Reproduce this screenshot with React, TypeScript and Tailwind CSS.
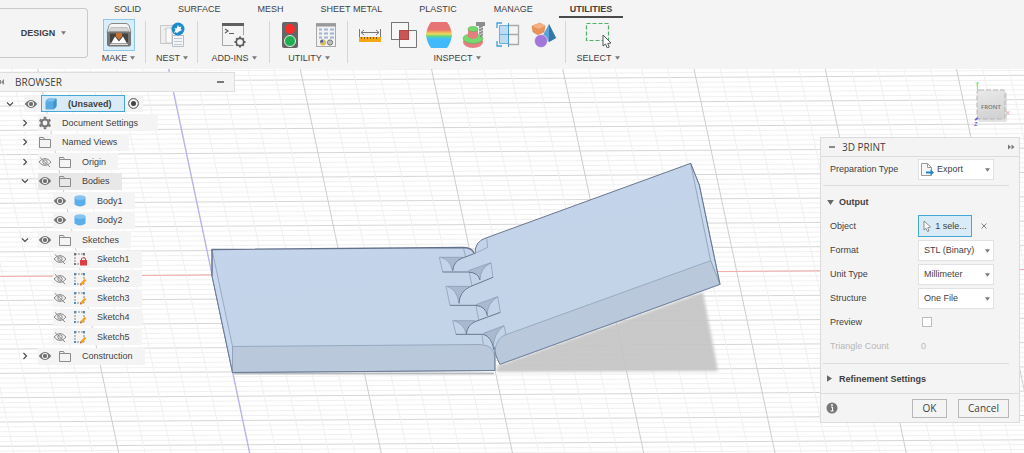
import { useState } from "react";
import type { ReactNode } from "react";

const Caret = ({ className = "" }: { className?: string }) => (
  <svg viewBox="0 0 6 4" className={`h-1 w-[5px] shrink-0 fill-[#7a7a7a] ${className}`}>
    <path d="M0 0h6L3 4z" />
  </svg>
);

/* ---------- toolbar icons ---------- */

const MakeIcon = () => (
  <svg viewBox="0 0 26 26" className="size-[26px]">
    <path d="M6 1.500h14q2 0 3 2l2 7H1l2-7q1-2 3-2z" fill="#f6f6f6" stroke="#888" />
    <path d="M2.500 9.500L5 5.500h16l2.500 4z" fill="#d3d5d6" stroke="#a5a5a5" strokeWidth=".6" />
    <rect x="1" y="9.500" width="24" height="15" rx="2.500" fill="#767676" />
    <path d="M4 11.500h18v8l-2 2.500H6l-2-2.500z" fill="#444" />
    <path d="M5 21.500l4-7 4 5 4-5 4 7z" fill="#fff" />
    <path d="M10 11h6v3.500l-3 3.500-3-3.500z" fill="#c9702f" />
    <path d="M4 22.500h18" stroke="#ddd" />
  </svg>
);

const NestIcon = () => (
  <svg viewBox="0 0 26 26" className="size-[26px]">
    <path d="M1.500 3.500h12v18h-12zM5.500 7.500h5v14" fill="#efefef" stroke="#c8c8c8" />
    <path d="M7 6h6v15H7z" fill="#fafafa" stroke="#c8c8c8" />
    <path d="M13.500 13.500h11v11h-11z" fill="#f3f5f7" stroke="#b9bfc4" />
    <path d="M15 16.500h8M15 19.500h8M15 22.500h8" stroke="#bccad6" />
    <circle cx="19" cy="7" r="6.500" fill="#1e8bcb" />
    <path d="M14.500 11.500l2-3.500-1-2 2 .5L19 3l1 2 2.500-.5-1 2.500 1.500 1-3 1.500-2 1.500-1.500-1z" fill="#fff" />
  </svg>
);

const AddInsIcon = () => (
  <svg viewBox="0 0 26 26" className="size-[26px]" fill="none" stroke="#5f5f5f">
    <path d="M1.500 2v21.500h11M22.500 2v11" stroke="#a5a5a5" />
    <path d="M1 2.500h22" strokeWidth="3" />
    <path d="M4 7l3 2L4 11M8 11.500h5" strokeWidth="1.200" />
    <circle cx="19" cy="20" r="3.700" strokeWidth="1.700" />
    <path
      d="M19 14.500v2M19 23.500v2M13.500 20h2M22.500 20h2M15.200 16.200l1.300 1.300M21.500 22.500l1.300 1.300M22.800 16.200l-1.300 1.300M16.500 22.500l-1.300 1.300"
      strokeWidth="2"
    />
  </svg>
);

const TrafficLightIcon = () => (
  <svg viewBox="0 0 18 26" className="h-[26px] w-[18px]">
    <rect x="1" y="0" width="16" height="26" rx="2" fill="#666" />
    <circle cx="9" cy="7" r="5" fill="#f92c2c" />
    <circle cx="9" cy="19" r="5.500" fill="#1fae50" stroke="#e4efe6" />
  </svg>
);

const ParameterTableIcon = () => (
  <svg viewBox="0 0 22 26" className="h-[26px] w-[22px]">
    <rect x="1.500" y="1.500" width="19" height="23" fill="#f1f2f4" stroke="#a9a9a9" />
    <path d="M1 3h20" stroke="#9a9a9a" strokeWidth="3" />
    <path d="M4 7.500h3M9 7.500h4M15 7.500h4M4 11.500h3M9 11.500h4M15 11.500h4M4 15.500h3M9 15.500h4M15 15.500h4" stroke="#a5b2d0" strokeWidth="2" />
    <circle cx="8" cy="20.500" r="3" fill="#d9bd58" />
    <path d="M8 17.500a3 3 0 0 0-3 3h3z" fill="#4c5d9c" />
    <circle cx="15" cy="20.500" r="2.600" fill="#bdbdbd" stroke="#777" />
  </svg>
);

const MeasureIcon = () => (
  <svg viewBox="0 0 24 26" className="h-[26px] w-[24px]" fill="none">
    <path d="M1.500 7v8M22.500 7v8M3 10.500h18M6 8l-3 2.500L6 13M18 8l3 2.500L18 13" stroke="#777" />
    <rect x="1" y="15" width="22" height="5" fill="#f5a814" />
    <path d="M3.500 15v2M6.500 15v2M9.500 15v2M12.500 15v2M15.500 15v2M18.500 15v2" stroke="#8a5f0c" />
  </svg>
);

const InterferenceIcon = () => (
  <svg viewBox="0 0 26 26" className="size-[26px]" fill="none" stroke="#777">
    <path d="M.5.5h17v17H.5zM8.500 8.500h17v17h-17z" fill="#f7f7f7" />
    <path d="M.5.5h17v17H.5z" />
    <path d="M8.500 8.500h9v9h-9z" fill="#cb5656" stroke="#b94242" />
  </svg>
);

const CurvatureIcon = () => (
  <svg viewBox="0 0 26 26" className="size-[26px]">
    <defs>
      <linearGradient id="curvature" x2="0" y2="1">
        <stop offset=".3" stopColor="#e77474" />
        <stop offset=".38" stopColor="#f0a55c" />
        <stop offset=".46" stopColor="#e9dc60" />
        <stop offset=".55" stopColor="#68d17d" />
        <stop offset=".61" stopColor="#3fcde0" />
        <stop offset=".67" stopColor="#42b9fa" />
      </linearGradient>
    </defs>
    <path d="M5 0h16q4 5 5 13-1 8-5 13H5Q1 21 0 13 1 5 5 0z" fill="url(#curvature)" />
  </svg>
);

const AccessibilityIcon = () => (
  <svg viewBox="0 0 26 26" className="size-[26px]">
    <ellipse cx="12" cy="20" rx="10" ry="6" fill="#e47f80" />
    <ellipse cx="12" cy="16.500" rx="10" ry="5" fill="#75d96c" stroke="#54a950" strokeWidth=".5" />
    <path d="M7 7v8q5 4 10 0V7z" fill="#e47f80" />
    <ellipse cx="12" cy="7" rx="5" ry="2.500" fill="#75d96c" stroke="#54a950" strokeWidth=".5" />
    <path d="M15 0h9v4h-2v9l-2 3-2-3V4h-3z" fill="#8c8c8c" />
    <path d="M18 7l4-2M18 10l4-2M18 13l4-2" stroke="#ddd" />
  </svg>
);

const SectionIcon = () => (
  <svg viewBox="0 0 26 26" className="size-[26px]" fill="none">
    <path d="M13 3.500h9.500v19H13M13 12.500h9" stroke="#aaa" strokeWidth="1.300" />
    <path d="M3.500 3.500h9v18h-9z" fill="#bcdcf4" stroke="#6db1de" />
    <path d="M3.500 12.500h9" stroke="#6db1de" />
    <path d="M12.500 1v24" stroke="#4797ce" />
    <path d="M1 6V1h5M1 19v5h5" stroke="#439edb" strokeWidth="1.300" />
  </svg>
);

const ComponentColorIcon = () => (
  <svg viewBox="0 0 26 26" className="size-[26px]">
    <path d="M9 1l5 3-1 6-6 3-5-3-1-6z" fill="#e8935a" stroke="#cf7a42" strokeWidth=".5" />
    <path d="M9 1l5 3-6 3-7-3z" fill="#f6b182" />
    <path d="M18 2l7 14-7 4-7-5z" fill="#5aa3d6" />
    <path d="M18 2l7 14-7 4z" fill="#3475aa" />
    <circle cx="10" cy="19" r="6.500" fill="#a277db" stroke="#f4f4f4" strokeWidth=".6" />
  </svg>
);

const SelectIcon = () => (
  <svg viewBox="0 0 26 26" className="size-[26px]" fill="none">
    <path d="M1.500 1.500h22v17h-22z" stroke="#4fb06c" strokeWidth="1.200" strokeDasharray="4 2" />
    <path d="M18 13v11l2.500-2 1.800 4 2-1-1.600-3.500 3.300-.5z" fill="#fff" stroke="#555" />
  </svg>
);

/* ---------- browser tree icons ---------- */

const ChevronIcon = ({ open }: { open?: boolean }) => (
  <svg viewBox="0 0 12 12" className="size-3" fill="none" stroke="#4d4d4d" strokeWidth="1.200">
    <path d={open ? "M3 4.500l3 3 3-3" : "M4.500 3l3 3-3 3"} />
  </svg>
);

const EyeIcon = () => (
  <svg viewBox="0 0 14 14" className="size-3.5">
    <path d="M.8 7Q7-.8 13.200 7 7 14.800.8 7z" fill="#747474" />
    <circle cx="7" cy="7" r="2.700" fill="none" stroke="#f4f4f4" />
  </svg>
);

const EyeOffIcon = () => (
  <svg viewBox="0 0 14 14" className="size-3.5" fill="none" stroke="#8a8a8a">
    <path d="M1 7Q7 0 13 7 7 14 1 7z" />
    <circle cx="7" cy="7" r="2.200" />
    <path d="M2 2.500l10 9.500" />
  </svg>
);

const FolderIcon = () => (
  <svg viewBox="0 0 14 14" className="size-3.5" fill="none" stroke="#8a8a8a">
    <path d="M1.500 12.500v-10h4l1 2h6v8z" />
    <path d="M2 4.500h5" />
  </svg>
);

const GearIcon = () => (
  <svg viewBox="0 0 14 14" className="size-3.5" fill="none" stroke="#757575">
    <circle cx="7" cy="7" r="3.500" strokeWidth="2.200" />
    <path d="M7 .8v2M7 11.200v2M1.600 3.900l1.800 1M10.600 9.100l1.800 1M1.600 10.100l1.800-1M10.600 4.900l1.800-1" strokeWidth="2.600" />
  </svg>
);

const DocumentIcon = () => (
  <svg viewBox="0 0 14 14" className="size-3.5">
    <path d="M1.500 5q0-2 2-3l1-.5h7q1 0 1 1V9q0 1-1 2l-2 1.500H2.500q-1 0-1-1z" fill="#58a9e3" />
    <path d="M2 4.500q1-2 2.500-3h7.500L9.500 4.500z" fill="#7cc0ef" />
    <path d="M9.500 4.500l3-3V9l-3 3.500z" fill="#3f90cd" />
  </svg>
);

const BodyIcon = () => (
  <svg viewBox="0 0 14 14" className="size-3.5">
    <path d="M1.500 3.500v7q5.500 4 11 0v-7z" fill="#5caeeb" />
    <ellipse cx="7" cy="3.500" rx="5.500" ry="2.300" fill="#85c4f2" />
  </svg>
);

const SketchIcon = ({ locked }: { locked?: boolean }) => (
  <svg viewBox="0 0 14 14" className="size-3.5" fill="none">
    <path d="M2 2v10h9V2z" stroke="#888" strokeDasharray="2 1" />
    <path d="M1 1h2v2H1zM10 1h2v2h-2zM1 11h2v2H1z" fill={locked ? "#777" : "#4a90c8"} />
    {locked ? (
      <>
        <rect x="7" y="8" width="7" height="5.500" fill="#e03a43" />
        <path d="M8.500 8V6.500q2-2 4 0V8" stroke="#e03a43" />
      </>
    ) : (
      <>
        <path d="M8 12.500l4.500-5" stroke="#f2a42a" strokeWidth="2.500" />
        <path d="M7 13.500l.3-2 1.700 1.600z" fill="#c55b39" />
      </>
    )}
  </svg>
);

/* ---------- data ---------- */

const tabs = ["SOLID", "SURFACE", "MESH", "SHEET METAL", "PLASTIC", "MANAGE", "UTILITIES"];

type Tool = { name: string; icon: ReactNode };

const toolGroups: { label: string; width: string; tools: Tool[] }[] = [
  { label: "MAKE", width: "w-[55px]", tools: [{ name: "3D Print", icon: <MakeIcon /> }] },
  { label: "NEST", width: "w-[52px]", tools: [{ name: "Nest", icon: <NestIcon /> }] },
  { label: "ADD-INS", width: "w-[72px]", tools: [{ name: "Scripts and Add-Ins", icon: <AddInsIcon /> }] },
  {
    label: "UTILITY",
    width: "w-[78px]",
    tools: [
      { name: "Compute All", icon: <TrafficLightIcon /> },
      { name: "Parameters", icon: <ParameterTableIcon /> },
    ],
  },
  {
    label: "INSPECT",
    width: "w-[218px]",
    tools: [
      { name: "Measure", icon: <MeasureIcon /> },
      { name: "Interference", icon: <InterferenceIcon /> },
      { name: "Curvature Map", icon: <CurvatureIcon /> },
      { name: "Accessibility Analysis", icon: <AccessibilityIcon /> },
      { name: "Section Analysis", icon: <SectionIcon /> },
      { name: "Component Colors", icon: <ComponentColorIcon /> },
    ],
  },
  { label: "SELECT", width: "w-[64px]", tools: [{ name: "Select", icon: <SelectIcon /> }] },
];

type Node = {
  label: string;
  icon: ReactNode;
  visible?: boolean;
  open?: boolean;
  child?: boolean;
  active?: boolean;
};

const nodes: Node[] = [
  { label: "Document Settings", icon: <GearIcon />, open: false },
  { label: "Named Views", icon: <FolderIcon />, open: false },
  { label: "Origin", icon: <FolderIcon />, visible: false, open: false },
  { label: "Bodies", icon: <FolderIcon />, visible: true, open: true, active: true },
  { label: "Body1", icon: <BodyIcon />, visible: true, child: true },
  { label: "Body2", icon: <BodyIcon />, visible: true, child: true },
  { label: "Sketches", icon: <FolderIcon />, visible: true, open: true },
  { label: "Sketch1", icon: <SketchIcon locked />, visible: false, child: true },
  { label: "Sketch2", icon: <SketchIcon />, visible: false, child: true },
  { label: "Sketch3", icon: <SketchIcon />, visible: false, child: true },
  { label: "Sketch4", icon: <SketchIcon />, visible: false, child: true },
  { label: "Sketch5", icon: <SketchIcon />, visible: false, child: true },
  { label: "Construction", icon: <FolderIcon />, visible: true, open: false },
];

/* ---------- toolbar ---------- */

const Toolbar = () => (
  <header className="flex h-[69px] shrink-0 bg-[#f4f4f4]">
    <button className="mt-2 flex h-[50px] w-[88px] shrink-0 items-center justify-center gap-1.5 rounded-r border border-l-0 border-[#c9c9c9] font-bold">
      DESIGN
      <Caret />
    </button>
    <div className="ml-[3px]">
      <nav className="ml-3 flex gap-[15px]">
        {tabs.map((tab) => (
          <a
            key={tab}
            href="#"
            className={`h-[18px] border-b-2 px-[11px] pt-[3px] leading-3 whitespace-nowrap ${
              tab === "UTILITIES" ? "border-[#4a4a4a] font-bold" : "border-transparent"
            }`}
          >
            {tab}
          </a>
        ))}
      </nav>
      <div className="flex pt-px">
        {toolGroups.map((group) => (
          <div key={group.label} className={`relative flex shrink-0 flex-col items-center ${group.width}`}>
            <div className={`flex h-8 items-center ${group.label === "UTILITY" ? "gap-4" : "gap-[9px]"}`}>
              {group.tools.map((tool) => (
                <button
                  key={tool.name}
                  aria-label={tool.name}
                  className={
                    group.label === "MAKE"
                      ? "flex size-8 items-center justify-center border border-[#8fc8e6] bg-[#d9eefa]"
                      : ""
                  }
                >
                  {tool.icon}
                </button>
              ))}
            </div>
            <button className="flex h-3.5 items-center gap-[3px]">
              {group.label}
              <Caret />
            </button>
            {group.label !== "SELECT" && <span className="absolute top-0.5 right-0 h-[42px] w-px bg-[#d6d6d6]" />}
          </div>
        ))}
      </div>
    </div>
  </header>
);

/* ---------- viewport ---------- */

const Grid = () => {
  const rows = Array.from({ length: 86 }, (_, i) => i);
  const columns = Array.from({ length: 46 }, (_, i) => i);
  return (
    <g fill="none">
      {rows.map((i) => {
        const y = 57.5 + i * 4.86;
        return <path key={i} d={`M0 ${y}L1024 ${y - 6.5}`} stroke={i % 5 === 0 ? "#d6d6d6" : "#f0f0f0"} />;
      })}
      {columns.map((i) => {
        const x = -93.5 + (i - 1) * 26.25;
        return <path key={i} d={`M${x} 69l81 384`} stroke={i % 5 === 1 ? "#cdcdcd" : "#f0f0f0"} />;
      })}
      <path d="M0 276.500L212 275" stroke="#f6adad" />
      <path d="M718 271.500L1024 269.500" stroke="#f6adad" />
      <path d="M168.500 69l81 384" stroke="#b0b0f6" />
    </g>
  );
};

const Hinge = () => (
  <g strokeLinejoin="round">
    <defs>
      <linearGradient id="face" x2=".3" y2="1">
        <stop offset="0" stopColor="#c4d4eb" />
        <stop offset="1" stopColor="#c2d4e8" />
      </linearGradient>
      <filter id="soft">
        <feGaussianBlur stdDeviation="1.500" />
      </filter>
    </defs>
    <path d="M497 372L718 371 703 292 497 366z" fill="#c4c4c4" fillOpacity=".92" filter="url(#soft)" />
    <path d="M234 373.500h260" stroke="#b9bdc2" strokeWidth="2" />

    {/* left plate */}
    <path d="M212 249.500L464 247.500Q472 248 474 253L495 345V370.500L232.500 372.500 212 276z" fill="url(#face)" />
    <path d="M212 249.500L232.500 346.500V372.500L212 276z" fill="#c8d9ef" stroke="#7b8da6" strokeWidth=".6" />
    <path d="M232.500 346.500L480 344.500Q494 345 494.800 357V370.500L232.500 372.500z" fill="#b9c8db" stroke="#8698b0" strokeWidth=".7" />
    <path d="M212 276v-26.500L464 247.500Q472 248 474 253" fill="none" stroke="#63718a" strokeWidth="1.300" />
    <path d="M212 276l20.500 96.500L495 370.500V352" fill="none" stroke="#6c7c94" />

    {/* right plate and knuckles, drawn at three times their size */}
    <g transform="translate(420 150) scale(.33333)">
      <path
        d="M165 310Q165 275 195 265L812 40 838 105 900 403 240 643Q226 620 224 590L190 554 140 552 172 500 118 460 150 410 98 363 125 325z"
        fill="url(#face)"
      />
      <path d="M812 40L838 105 900 403 872 332z" fill="#c9daef" stroke="#7b8da6" strokeWidth="2" />
      <path
        d="M255 555L872 332 900 403 240 643Q222 612 227 590 235 562 255 555z"
        fill="#b9c8db"
        stroke="#8698b0"
        strokeWidth="2"
      />
      <g fill="#a9bad0">
        <path d="M65 322H128Q102 335 98 363 90 328 65 322z" />
        <path d="M84 409H146Q118 425 117 460 110 420 84 409z" />
        <path d="M104 512H165Q142 525 139 552 132 522 104 512z" />
        <path d="M145 362L213 338Q180 355 180 390 175 368 145 368z" />
        <path d="M168 464L233 440Q200 460 202 497 198 470 168 466z" />
        <path d="M190 550L252 527Q222 548 220 590 215 560 190 554z" />
      </g>
      <g fill="none" stroke="#8496ae" strokeWidth="2">
        <path d="M130 322H58L68 366M148 409H78L90 466M166 512H98L108 553" />
        <path d="M62 322Q90 328 98 363M82 409Q112 420 117 460M102 512Q132 522 139 552" />
        <path d="M145 362L213 338 219 382M168 464L233 440 241 487M190 550L252 527 258 555" />
        <path d="M213 338Q180 355 180 390M233 440Q200 460 202 497M252 527Q222 548 220 590" />
        <path d="M200 265L203 292 165 310M130 293L137 322M148 368L156 408M168 466L176 510M186 555L190 582" />
      </g>
      <g fill="none" stroke="#68768c" strokeWidth="3">
        <path d="M68 366H145Q175 368 180 390M90 466H168Q198 470 202 497M108 553H190Q215 560 222 600" />
        <path d="M98 363Q100 335 125 325L165 310M117 460Q118 425 150 410L219 382M139 552Q142 525 165 515L241 487" />
        <path d="M165 310Q165 275 195 265L812 40 838 105 900 403" />
        <path d="M900 403L240 643Q222 612 224 590" stroke="#7587a2" />
      </g>
    </g>
  </g>
);

const ViewCube = () => (
  <svg viewBox="0 0 60 68" className="h-[68px] w-[60px]" aria-label="View cube">
    <defs>
      <linearGradient id="cube" x2=".2" y2="1">
        <stop stopColor="#e9e9e9" />
        <stop offset="1" stopColor="#d3d3d3" />
      </linearGradient>
    </defs>
    <rect x="18" y="23" width="29" height="30" rx="2" fill="#c8c8c8" opacity=".5" />
    <path d="M17.500 21V13" stroke="#90e88f" strokeWidth="1.300" />
    <rect x="17" y="21" width="28" height="29" rx="2" fill="url(#cube)" stroke="#b5b5b5" strokeDasharray="5 2" />
    <path d="M15 51l3-2" stroke="#6767dd" strokeWidth="2" />
    <text x="31" y="40" textAnchor="middle" className="fill-[#777] font-['Open_Sans',sans-serif] text-[6px] font-semibold">
      FRONT
    </text>
    <text x="15" y="17" className="fill-[#78e678] text-[6px]">Y</text>
    <text x="46" y="46" className="fill-[#ee8b8b] text-[6px]">X</text>
    <text x="14" y="57" className="fill-[#4b4bd5] text-[6px]">Z</text>
  </svg>
);

/* ---------- browser ---------- */

const Browser = () => (
  <aside className="w-[235px] shrink-0 pt-[3px]">
    <div className="flex h-5 items-center border border-l-0 border-[#dedede] bg-[#f4f4f4] pr-2.5">
      <svg viewBox="0 0 5 6" className="h-1.5 w-[5px] fill-[#8a8a8a]">
        <path d="M0 1h1v4H0zM4 0v6L1 3z" />
      </svg>
      <h2 className="ml-2.5 font-['Open_Sans',sans-serif] text-[10px]">BROWSER</h2>
      <button aria-label="Collapse browser" className="ml-auto h-0.5 w-[7px] bg-[#7a7a7a]" />
    </div>
    <ul className="mt-[3px] flex h-[270px] flex-col items-start justify-between">
      <li className="flex h-[17px] items-center pl-1">
        <button aria-label="Toggle document" className="mr-2">
          <ChevronIcon open />
        </button>
        <div className="flex h-full items-center bg-[#f4f4f4] pr-1">
          <EyeIcon />
          <span className="ml-[3px] flex h-full items-center border border-[#45a6d8] bg-[#d8ebf6] pr-3 pl-0.5 font-bold">
            <DocumentIcon />
            <span className="ml-2.5">(Unsaved)</span>
          </span>
          <input
            type="radio"
            defaultChecked
            aria-label="Activate document"
            className="ml-[3px] size-[11px] appearance-none rounded-full border border-[#777] bg-[#444] shadow-[inset_0_0_0_2px_#f4f4f4]"
          />
        </div>
      </li>
      {nodes.map((node) => (
        <li key={node.label} className="flex h-[17px] items-center pl-[19px]">
          {node.child ? (
            <span className="w-[34px]" />
          ) : (
            <button aria-label={`Toggle ${node.label}`} className="mr-[7px]">
              <ChevronIcon open={node.open} />
            </button>
          )}
          <div
            className={`flex h-full items-center gap-1.5 ${node.active ? "bg-[#e8e8e8]" : "bg-[#f4f4f4]"} ${
              node.label === "Document Settings" ? "pr-5" : "pr-3"
            }`}
          >
            {node.visible === true && <EyeIcon />}
            {node.visible === false && <EyeOffIcon />}
            {node.icon}
            <span className="ml-1">{node.label}</span>
          </div>
        </li>
      ))}
    </ul>
  </aside>
);

/* ---------- 3D print dialog ---------- */

const Field = ({ label, id, children }: { label: string; id: string; children: ReactNode }) => (
  <div className="flex h-6 items-center pl-[9px]">
    <label htmlFor={id} className="w-[88px] shrink-0">
      {label}
    </label>
    {children}
  </div>
);

const Dropdown = ({ id, options, icon }: { id: string; options: string[]; icon?: ReactNode }) => (
  <div className="relative w-[76px]">
    <select
      id={id}
      className={`h-[21px] w-full appearance-none border border-[#e2e2e2] bg-white ${icon ? "pl-[18px]" : "pl-[5px]"}`}
    >
      {options.map((option) => (
        <option key={option}>{option}</option>
      ))}
    </select>
    {icon}
    <Caret className="pointer-events-none absolute top-[9px] right-1" />
  </div>
);

const PrintDialog = () => {
  const [preview, setPreview] = useState(false);
  return (
    <section className="w-[200px] border border-[#dcdcdc] bg-[#f4f4f4]">
      <div className="flex h-[19px] items-center border-b border-[#dcdcdc] pr-1 pl-2">
        <button aria-label="Collapse dialog" className="h-0.5 w-1.5 bg-[#8a8a8a]" />
        <h2 className="ml-[7px] font-['Open_Sans',sans-serif] text-[10px]">3D PRINT</h2>
        <svg viewBox="0 0 7 6" className="ml-auto h-1.5 w-[7px] fill-[#777]">
          <path d="M0 .5L3 3 0 5.500zM3.500.5L6.500 3l-3 2.500z" />
        </svg>
      </div>
      <Field label="Preparation Type" id="preparation">
        <Dropdown
          id="preparation"
          options={["Export", "Print"]}
          icon={
            <svg viewBox="0 0 13 13" className="pointer-events-none absolute top-1 left-[3px] size-[13px]" fill="none">
              <path d="M.5.5h6l4 4v8H.5z" fill="#f6f6f6" stroke="#999" />
              <path d="M6.500.5v4h4" stroke="#999" />
              <path d="M5 9.500h5" stroke="#2284c7" strokeWidth="2" />
              <path d="M9.500 6.500L13 9.500l-3.500 3z" fill="#2284c7" />
            </svg>
          }
        />
      </Field>
      <hr className="mt-1 mr-2.5 ml-0.5 border-[#dcdcdc]" />
      <h3 className="flex h-7 items-center pt-1 font-bold">
        <svg viewBox="0 0 8 6" className="mr-[5px] ml-1.5 h-[5px] w-[7px] fill-[#666]">
          <path d="M0 0h8L4 6z" />
        </svg>
        Output
      </h3>
      <Field label="Object" id="object">
        <button
          id="object"
          className="flex h-[22px] w-[54px] items-center justify-center gap-1 border border-[#45a6d8] bg-[#d8ebf6]"
        >
          <svg viewBox="0 0 8 12" className="h-3 w-2" fill="#fff" stroke="#777" strokeWidth=".8">
            <path d="M1 1v9l2-1.700L4.500 11.500 6 11 4.700 7.700 7.500 7z" />
          </svg>
          1 sele...
        </button>
        <button aria-label="Clear selection" className="ml-[9px]">
          <svg viewBox="0 0 6 6" className="size-1.5" stroke="#666" strokeWidth=".8">
            <path d="M.5.5l5 5M5.500.5l-5 5" />
          </svg>
        </button>
      </Field>
      <Field label="Format" id="format">
        <Dropdown id="format" options={["STL (Binary)", "STL (ASCII)", "OBJ", "3MF"]} />
      </Field>
      <Field label="Unit Type" id="unit">
        <Dropdown id="unit" options={["Millimeter", "Centimeter", "Inch"]} />
      </Field>
      <Field label="Structure" id="structure">
        <Dropdown id="structure" options={["One File", "One File Per Body"]} />
      </Field>
      <Field label="Preview" id="preview">
        <input
          id="preview"
          type="checkbox"
          checked={preview}
          onChange={() => setPreview(!preview)}
          className="ml-1 size-2.5 appearance-none border border-[#bdbdbd] bg-white checked:bg-[#45a6d8]"
        />
      </Field>
      <div className="flex h-6 items-center pl-[9px] text-[#b8b8b8]">
        <span className="w-[91px]">Triangle Count</span>
        <output>0</output>
      </div>
      <hr className="mt-[5px] mr-2.5 ml-0.5 border-[#dcdcdc]" />
      <h3 className="flex h-[30px] items-center border-b border-[#dcdcdc] font-bold">
        <svg viewBox="0 0 6 8" className="mr-[7px] ml-1.5 h-[7px] w-[5px] fill-[#666]">
          <path d="M0 0v8l6-4z" />
        </svg>
        Refinement Settings
      </h3>
      <div className="flex h-7 items-center pr-2.5 pl-[5px]">
        <button aria-label="Information" className="mr-auto">
          <svg viewBox="0 0 12 12" className="size-3">
            <circle cx="6" cy="6" r="5.500" fill="#777" />
            <path d="M5 5h1.500v4M4.500 9h3" stroke="#fff" fill="none" />
            <circle cx="6" cy="3" r=".9" fill="#fff" />
          </svg>
        </button>
        <button className="mr-[11px] h-[19px] w-[35px] border border-[#b8b8b8] font-['Open_Sans',sans-serif] text-[10px] leading-3">
          OK
        </button>
        <button className="h-[19px] w-[51px] border border-[#b8b8b8] font-['Open_Sans',sans-serif] text-[10px] leading-3">
          Cancel
        </button>
      </div>
    </section>
  );
};

export default function App() {
  return (
    <div className="flex min-h-screen flex-col bg-white font-['Liberation_Sans',Arial,sans-serif] text-[9px] leading-3 text-[#3f3f3f]">
      <Toolbar />
      <main className="relative flex flex-1 items-start justify-between overflow-hidden">
        <svg
          viewBox="0 69 1024 384"
          preserveAspectRatio="xMidYMid slice"
          className="absolute inset-0 h-full w-full"
          aria-label="Model viewport"
        >
          <Grid />
          <Hinge />
        </svg>
        <div className="relative">
          <Browser />
        </div>
        <div className="relative mr-1 flex flex-col items-end">
          <ViewCube />
          <PrintDialog />
        </div>
      </main>
    </div>
  );
}
